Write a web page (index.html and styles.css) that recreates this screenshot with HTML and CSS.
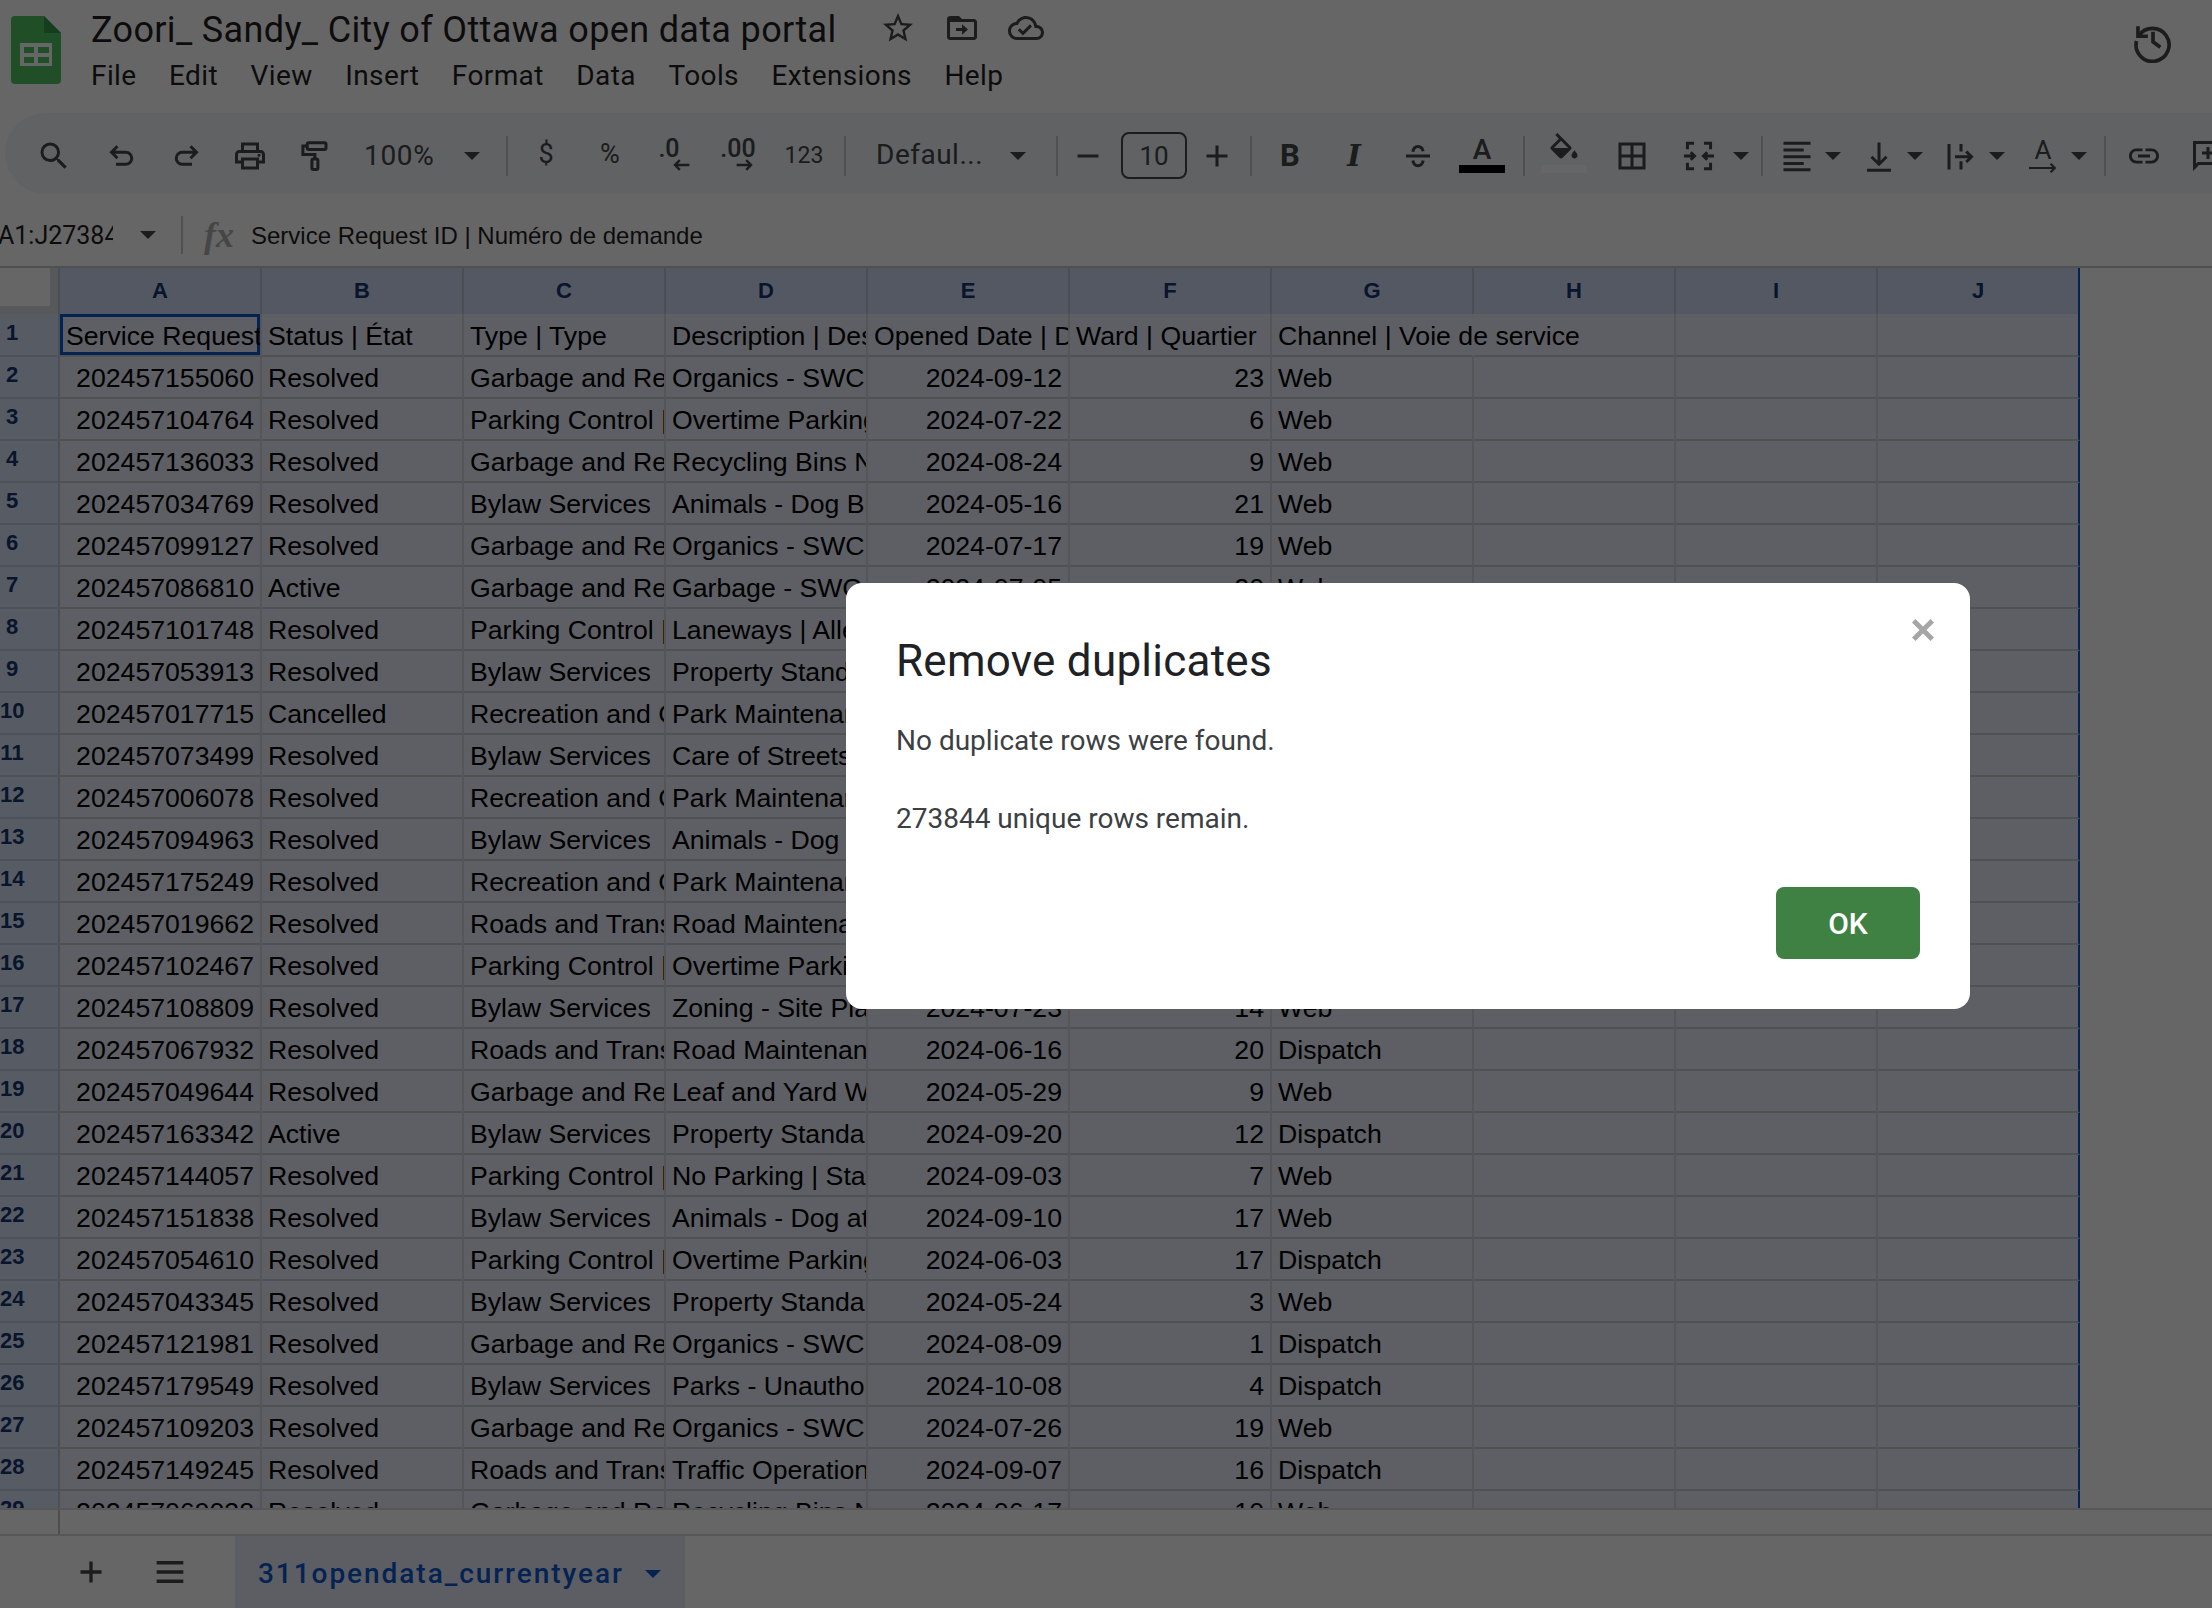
FILE: index.html
```html
<!DOCTYPE html>
<html lang="en">
<head>
  <meta charset="UTF-8">
  <title>Zoori_ Sandy_ City of Ottawa open data portal - Google Sheets</title>
  <link rel="stylesheet" href="styles.css">
</head>
<body>

  <header class="top">
    <svg class="logo" viewBox="0 0 50 68">
      <path class="logo-body" d="M4 0h29l17 17v47a4 4 0 0 1-4 4H4a4 4 0 0 1-4-4V4a4 4 0 0 1 4-4z"/>
      <path class="logo-fold" d="M33 0l17 17H33z"/>
      <path class="logo-grid" fill-rule="evenodd" d="M9 27h32v23H9zM13 31v6h10v-6zM27 31v6h11v-6zM13 41v6h10v-6zM27 41v6h11v-6z"/>
    </svg>
    <div class="doc">
      <div class="doc-title">
        <span class="title">Zoori_ Sandy_ City of Ottawa open data portal</span>
        <svg class="ic ic-star" viewBox="0 0 24 24"><path d="M22 9.24l-7.19-.62L12 2 9.19 8.63 2 9.24l5.46 4.73L5.82 21 12 17.27 18.18 21l-1.63-7.03L22 9.24zM12 15.4l-3.76 2.27 1-4.28-3.32-2.88 4.38-.38L12 6.1l1.71 4.04 4.38.38-3.32 2.88 1 4.28L12 15.4z"/></svg>
        <svg class="ic ic-move" viewBox="0 0 24 24"><path d="M20 6h-8l-2-2H4c-1.1 0-2 .9-2 2v12c0 1.1.9 2 2 2h16c1.1 0 2-.9 2-2V8c0-1.1-.9-2-2-2zm0 12H4V8h16v10zM12 16.5l4-3.5-4-3.5V12H8v2h4z"/></svg>
        <svg class="ic ic-cloud" viewBox="0 0 24 24"><path d="M19.35 10.04C18.67 6.59 15.64 4 12 4 9.11 4 6.6 5.64 5.35 8.04 2.34 8.36 0 10.91 0 14c0 3.31 2.69 6 6 6h13c2.76 0 5-2.24 5-5 0-2.64-2.05-4.78-4.65-4.96zM19 18H6c-2.21 0-4-1.79-4-4 0-2.05 1.53-3.76 3.56-3.97l1.07-.11.5-.95C8.08 7.14 9.94 6 12 6c2.62 0 4.88 1.86 5.39 4.43l.3 1.5 1.53.11c1.56.1 2.78 1.41 2.78 2.96 0 1.65-1.35 3-3 3zm-9-3.82l-2.09-2.09L6.5 13.5 10 17l6.01-6.01-1.41-1.41z"/></svg>
      </div>
      <nav class="menu">
        <a>File</a><a>Edit</a><a>View</a><a>Insert</a><a>Format</a><a>Data</a><a>Tools</a><a>Extensions</a><a>Help</a>
      </nav>
    </div>
    <svg class="history" viewBox="0 0 24 24"><path d="M3.8 4v5.4h5.4M4.2 9.2A9 9 0 1 1 3 12M12 7v5.4l4 3"/></svg>
  </header>

  <div class="toolbar">
    <span class="btn btn-search"><svg class="ic" viewBox="0 0 24 24"><path d="M15.5 14h-.79l-.28-.27A6.471 6.471 0 0 0 16 9.5 6.5 6.5 0 1 0 9.5 16c1.61 0 3.09-.59 4.23-1.57l.27.28v.79l5 4.99L20.49 19l-4.99-5zm-6 0C7.01 14 5 11.99 5 9.5S7.01 5 9.5 5 14 7.01 14 9.5 11.99 14 9.5 14z"/></svg></span>
    <span class="btn"><svg class="ic line" viewBox="0 0 24 24"><path d="M9 5.5l-4 4 4 4M5 9.5h9.5a4 4 0 0 1 0 8H8"/></svg></span>
    <span class="btn"><svg class="ic line" viewBox="0 0 24 24"><path d="M15 5.5l4 4-4 4M19 9.5H9.5a4 4 0 0 0 0 8H16"/></svg></span>
    <span class="btn"><svg class="ic" viewBox="0 0 24 24"><path d="M19 8h-1V3H6v5H5c-1.66 0-3 1.34-3 3v6h4v4h12v-4h4v-6c0-1.66-1.34-3-3-3zM8 5h8v3H8V5zm8 12v2H8v-4h8v2zm2-2v-2H6v2H4v-4c0-.55.45-1 1-1h14c.55 0 1 .45 1 1v4h-2z"/><circle cx="18" cy="11.5" r="1"/></svg></span>
    <span class="btn"><svg class="ic line" viewBox="0 0 24 24"><rect x="7.5" y="3.2" width="12.5" height="4.4" rx="1"/><path d="M7.5 5.4H4.6v5.6h8v3"/><rect x="10.6" y="14" width="4" height="7" rx="1"/></svg></span>
    <span class="drop drop-zoom"><span>100%</span><i class="caret"></i></span>
    <i class="sep sep-zoom"></i>
    <span class="btn btn-txt">$</span>
    <span class="btn btn-txt">%</span>
    <span class="btn btn-dec btn-dec-less"><span>.0</span><svg class="arrow" viewBox="0 0 14 10"><path d="M14 5H3M6 1L2 5l4 4"/></svg></span>
    <span class="btn btn-dec"><span>.00</span><svg class="arrow" viewBox="0 0 14 10"><path d="M0 5h11M8 1l4 4-4 4"/></svg></span>
    <span class="btn btn-123">123</span>
    <i class="sep sep-num"></i>
    <span class="drop drop-font"><span>Defaul...</span><i class="caret"></i></span>
    <i class="sep sep-font"></i>
    <span class="btn btn-minus"><svg class="ic line" viewBox="0 0 24 24"><path d="M5 12h14"/></svg></span>
    <span class="size">10</span>
    <span class="btn btn-plus"><svg class="ic line" viewBox="0 0 24 24"><path d="M5 12h14M12 5v14"/></svg></span>
    <i class="sep sep-size"></i>
    <span class="btn btn-b">B</span>
    <span class="btn btn-i">I</span>
    <span class="btn"><svg class="ic line" viewBox="0 0 24 24"><path d="M4 12h16M8.6 9.2C8.9 6.8 10.4 5.6 12 5.6s3 1.2 3.4 3.2M8.6 15c.2 2.2 1.700 3.500 3.400 3.500s3.200-1.300 3.400-3.500"/></svg></span>
    <span class="btn btn-color"><span class="a">A</span><i class="bar bar-text"></i></span>
    <i class="sep sep-color"></i>
    <span class="btn btn-color"><svg class="ic" viewBox="0 0 24 18"><path d="M16.56 8.94L7.62 0 6.210 1.410l2.380 2.380-5.150 5.150c-.59.59-.59 1.540 0 2.120l5.500 5.500c.29.29.68.44 1.060.44s.77-.15 1.060-.44l5.500-5.500c.59-.58.59-1.530 0-2.120zM5.210 10L10 5.210 14.790 10H5.210zM19 11.500s-2 2.170-2 3.500c0 1.100.9 2 2 2s2-.9 2-2c0-1.330-2-3.500-2-3.500z"/></svg><i class="bar bar-fill"></i></span>
    <span class="btn btn-borders"><svg class="ic" viewBox="0 0 24 24"><path d="M3 3v18h18V3H3zm8 16H5v-6h6v6zm0-8H5V5h6v6zm8 8h-6v-6h6v6zm0-8h-6V5h6v6z"/></svg></span>
    <span class="btn btn-merge"><svg class="ic line" viewBox="0 0 24 24"><path d="M8.700 3.500H4.300v4M4.300 16.500v4h4.400M15.300 3.500h4.400v4M19.700 16.500v4h-4.400M2 12h7M6.500 9.500L9 12l-2.500 2.500M22 12h-7M17.500 9.500L15 12l2.500 2.500"/></svg></span>
    <i class="caret caret-merge"></i>
    <i class="sep sep-merge"></i>
    <span class="split"><svg class="ic line" viewBox="0 0 24 24"><path d="M3 3.500h18M3 8h13.500M3 12.500h18M3 17h13.500M3 21.200h18"/></svg><i class="caret"></i></span>
    <span class="split"><svg class="ic line" viewBox="0 0 24 24"><path d="M4 21.500h16M12 3v14M7 12.500l5 5 5-5"/></svg><i class="caret"></i></span>
    <span class="split"><svg class="ic line" viewBox="0 0 24 24"><path d="M4 4v17M12 4v5M12 15.500V21M8 12.500h11M15.500 9l3.500 3.500-3.500 3.500"/></svg><i class="caret"></i></span>
    <span class="split"><span class="rot"><span>A</span><svg class="arrow" viewBox="0 0 26 10"><path d="M0 5h23M20 1l4 4-4 4"/></svg></span><i class="caret"></i></span>
    <i class="sep sep-rot"></i>
    <span class="btn"><svg class="ic" viewBox="0 0 24 24"><path d="M3.900 12c0-1.710 1.390-3.100 3.100-3.100h4V7H7c-2.760 0-5 2.240-5 5s2.240 5 5 5h4v-1.900H7c-1.710 0-3.100-1.390-3.100-3.100zM8 13h8v-2H8v2zm9-6h-4v1.900h4c1.710 0 3.100 1.390 3.100 3.100s-1.390 3.100-3.100 3.100h-4V17h4c2.760 0 5-2.240 5-5s-2.240-5-5-5z"/></svg></span>
    <span class="btn"><svg class="ic" viewBox="0 0 24 24"><path fill-rule="evenodd" d="M22 2H2v20l4-4h16V2zM20 16H5.170L4 17.170V4h16v12zM11 6h2v3h3v2h-3v3h-2v-3H8V9h3V6z"/></svg></span>
  </div>

  <div class="formula">
    <div class="namebox"><span>A1:J27384</span></div>
    <i class="caret"></i>
    <i class="sep sep-name"></i>
    <span class="fx">fx</span>
    <span class="formula-text">Service Request ID | Numéro de demande</span>
  </div>

  <div class="grid">
    <table class="sheet">
      <colgroup>
        <col class="c-row"><col span="10" class="c-col">
      </colgroup>
      <thead>
        <tr><th class="corner"><i></i></th><th>A</th><th>B</th><th>C</th><th>D</th><th>E</th><th>F</th><th>G</th><th>H</th><th>I</th><th>J</th></tr>
      </thead>
      <tbody>
        <tr class="first"><th>1</th><td class="active">Service Request ID | Numéro de demande</td><td>Status | État</td><td>Type | Type</td><td>Description | Description</td><td>Opened Date | Date</td><td>Ward | Quartier</td><td class="spill">Channel | Voie de service</td><td></td><td></td><td></td></tr>
        <tr><th>2</th><td class="n">202457155060</td><td>Resolved</td><td>Garbage and Recycling</td><td>Organics - SWC | Matières</td><td class="n">2024-09-12</td><td class="n">23</td><td>Web</td><td></td><td></td><td></td></tr>
        <tr><th>3</th><td class="n">202457104764</td><td>Resolved</td><td>Parking Control | Contrôle</td><td>Overtime Parking</td><td class="n">2024-07-22</td><td class="n">6</td><td>Web</td><td></td><td></td><td></td></tr>
        <tr><th>4</th><td class="n">202457136033</td><td>Resolved</td><td>Garbage and Recycling</td><td>Recycling Bins Not</td><td class="n">2024-08-24</td><td class="n">9</td><td>Web</td><td></td><td></td><td></td></tr>
        <tr><th>5</th><td class="n">202457034769</td><td>Resolved</td><td>Bylaw Services</td><td>Animals - Dog Bite</td><td class="n">2024-05-16</td><td class="n">21</td><td>Web</td><td></td><td></td><td></td></tr>
        <tr><th>6</th><td class="n">202457099127</td><td>Resolved</td><td>Garbage and Recycling</td><td>Organics - SWC | Matières</td><td class="n">2024-07-17</td><td class="n">19</td><td>Web</td><td></td><td></td><td></td></tr>
        <tr><th>7</th><td class="n">202457086810</td><td>Active</td><td>Garbage and Recycling</td><td>Garbage - SWC</td><td class="n">2024-07-05</td><td class="n">20</td><td>Web</td><td></td><td></td><td></td></tr>
        <tr><th>8</th><td class="n">202457101748</td><td>Resolved</td><td>Parking Control | Contrôle</td><td>Laneways | Allées</td><td></td><td></td><td></td><td></td><td></td><td></td></tr>
        <tr><th>9</th><td class="n">202457053913</td><td>Resolved</td><td>Bylaw Services</td><td>Property Standards</td><td></td><td></td><td></td><td></td><td></td><td></td></tr>
        <tr><th>10</th><td class="n">202457017715</td><td>Cancelled</td><td>Recreation and Culture</td><td>Park Maintenance</td><td></td><td></td><td></td><td></td><td></td><td></td></tr>
        <tr><th>11</th><td class="n">202457073499</td><td>Resolved</td><td>Bylaw Services</td><td>Care of Streets</td><td></td><td></td><td></td><td></td><td></td><td></td></tr>
        <tr><th>12</th><td class="n">202457006078</td><td>Resolved</td><td>Recreation and Culture</td><td>Park Maintenance</td><td></td><td></td><td></td><td></td><td></td><td></td></tr>
        <tr><th>13</th><td class="n">202457094963</td><td>Resolved</td><td>Bylaw Services</td><td>Animals - Dog</td><td></td><td></td><td></td><td></td><td></td><td></td></tr>
        <tr><th>14</th><td class="n">202457175249</td><td>Resolved</td><td>Recreation and Culture</td><td>Park Maintenance</td><td></td><td></td><td></td><td></td><td></td><td></td></tr>
        <tr><th>15</th><td class="n">202457019662</td><td>Resolved</td><td>Roads and Transportation</td><td>Road Maintenance</td><td></td><td></td><td></td><td></td><td></td><td></td></tr>
        <tr><th>16</th><td class="n">202457102467</td><td>Resolved</td><td>Parking Control | Contrôle</td><td>Overtime Parking</td><td></td><td></td><td></td><td></td><td></td><td></td></tr>
        <tr><th>17</th><td class="n">202457108809</td><td>Resolved</td><td>Bylaw Services</td><td>Zoning - Site Plan</td><td class="n">2024-07-23</td><td class="n">14</td><td>Web</td><td></td><td></td><td></td></tr>
        <tr><th>18</th><td class="n">202457067932</td><td>Resolved</td><td>Roads and Transportation</td><td>Road Maintenance</td><td class="n">2024-06-16</td><td class="n">20</td><td>Dispatch</td><td></td><td></td><td></td></tr>
        <tr><th>19</th><td class="n">202457049644</td><td>Resolved</td><td>Garbage and Recycling</td><td>Leaf and Yard Waste</td><td class="n">2024-05-29</td><td class="n">9</td><td>Web</td><td></td><td></td><td></td></tr>
        <tr><th>20</th><td class="n">202457163342</td><td>Active</td><td>Bylaw Services</td><td>Property Standards</td><td class="n">2024-09-20</td><td class="n">12</td><td>Dispatch</td><td></td><td></td><td></td></tr>
        <tr><th>21</th><td class="n">202457144057</td><td>Resolved</td><td>Parking Control | Contrôle</td><td>No Parking | Stationnement</td><td class="n">2024-09-03</td><td class="n">7</td><td>Web</td><td></td><td></td><td></td></tr>
        <tr><th>22</th><td class="n">202457151838</td><td>Resolved</td><td>Bylaw Services</td><td>Animals - Dog at Large</td><td class="n">2024-09-10</td><td class="n">17</td><td>Web</td><td></td><td></td><td></td></tr>
        <tr><th>23</th><td class="n">202457054610</td><td>Resolved</td><td>Parking Control | Contrôle</td><td>Overtime Parking</td><td class="n">2024-06-03</td><td class="n">17</td><td>Dispatch</td><td></td><td></td><td></td></tr>
        <tr><th>24</th><td class="n">202457043345</td><td>Resolved</td><td>Bylaw Services</td><td>Property Standards</td><td class="n">2024-05-24</td><td class="n">3</td><td>Web</td><td></td><td></td><td></td></tr>
        <tr><th>25</th><td class="n">202457121981</td><td>Resolved</td><td>Garbage and Recycling</td><td>Organics - SWC | Matières</td><td class="n">2024-08-09</td><td class="n">1</td><td>Dispatch</td><td></td><td></td><td></td></tr>
        <tr><th>26</th><td class="n">202457179549</td><td>Resolved</td><td>Bylaw Services</td><td>Parks - Unauthorized</td><td class="n">2024-10-08</td><td class="n">4</td><td>Dispatch</td><td></td><td></td><td></td></tr>
        <tr><th>27</th><td class="n">202457109203</td><td>Resolved</td><td>Garbage and Recycling</td><td>Organics - SWC | Matières</td><td class="n">2024-07-26</td><td class="n">19</td><td>Web</td><td></td><td></td><td></td></tr>
        <tr><th>28</th><td class="n">202457149245</td><td>Resolved</td><td>Roads and Transportation</td><td>Traffic Operations</td><td class="n">2024-09-07</td><td class="n">16</td><td>Dispatch</td><td></td><td></td><td></td></tr>
        <tr><th>29</th><td class="n">202457069038</td><td>Resolved</td><td>Garbage and Recycling</td><td>Recycling Bins Not</td><td class="n">2024-06-17</td><td class="n">10</td><td>Web</td><td></td><td></td><td></td></tr>
      </tbody>
    </table>
  </div>

  <div class="hscroll"><i></i></div>

  <footer class="tabs">
    <svg class="tabs-ic tabs-add" viewBox="0 0 24 24"><path d="M5 12h14M12 5v14"/></svg>
    <svg class="tabs-ic tabs-all" viewBox="0 0 24 24"><path d="M2 5h20M2 12h20M2 19h20"/></svg>
    <div class="tab">
      <span>311opendata_currentyear</span>
      <i class="caret caret-tab"></i>
    </div>
  </footer>

  <!-- dialogo por cima de tudo -->
  <div class="scrim"></div>
  <div class="dialog">
    <svg class="close" viewBox="0 0 22 22"><path d="M2.500 2.500l17 17M19.500 2.500l-17 17"/></svg>
    <h2>Remove duplicates</h2>
    <p class="line-1">No duplicate rows were found.</p>
    <p class="line-2">273844 unique rows remain.</p>
    <div class="actions"><button>OK</button></div>
  </div>

</body>
</html>
```

FILE: styles.css
```css
* { box-sizing: border-box; }
html, body {
  margin: 0;
  height: 1608px;
  overflow: hidden;
}
body {
  position: relative;
  background: #fff;
  color: #1f1f1f;
  font-family: Roboto, sans-serif;
}
i { display: block; }

/* top */
.top {
  display: flex;
  height: 113px;
  padding: 16px 0 0 11px;
}
.logo { width: 50px; height: 68px; flex: none; }
.logo-body { fill: #4fc463; }
.logo-fold { fill: #379a4c; }
.logo-grid { fill: #fff; }
.doc { margin-left: 30px; margin-top: -16px; }
.doc-title {
  display: flex;
  align-items: center;
  height: 56px;
}
.title {
  width: 789px;
  padding-top: 3px;
  font-size: 36px;
  letter-spacing: 0.35px;
  white-space: nowrap;
}
.ic { width: 36px; height: 36px; fill: #444746; flex: none; }
.ic-move { margin-left: 28px; }
.ic-cloud { margin-left: 28px; }
.menu {
  display: flex;
  gap: 32.5px;
  margin-top: 1px;
  font-size: 28px;
  letter-spacing: 0.4px;
  line-height: 38px;
}
.history {
  width: 44px;
  height: 44px;
  margin: 3px 37px 0 auto;
  fill: none;
  stroke: #444746;
  stroke-width: 2;
}
.line, .arrow {
  fill: none;
  stroke: #444746;
  stroke-width: 2;
}

/* toolbar */
.toolbar {
  display: flex;
  align-items: center;
  width: 2300px;
  height: 81px;
  margin-left: 5px;
  padding: 4px 0 0 16px;
  background: #f0f4f9;
  border-radius: 48px;
  color: #444746;
}
.btn {
  display: flex;
  align-items: center;
  justify-content: center;
  width: 64px;
  height: 56px;
  flex: none;
}
.btn-search { margin: 0 4px 0 1px; }
.sep {
  width: 2px;
  height: 40px;
  background: #c7c7c7;
  flex: none;
}
.sep-zoom { margin: 0 6px 0 16px; }
.sep-num { margin: 0 10px 0 6px; }
.sep-font { margin: 0 0 0 20px; }
.sep-size { margin: 0 6px 0 8px; }
.sep-color { margin: 0 7px 0 9px; }
.sep-merge { margin: 0 2px 0 12px; }
.sep-rot { margin: 0 6px 0 11px; }
.caret {
  width: 0;
  height: 0;
  border-left: 8px solid transparent;
  border-right: 8px solid transparent;
  border-top: 8px solid #444746;
  flex: none;
}
.drop {
  display: flex;
  align-items: center;
  justify-content: space-between;
  height: 56px;
  padding-right: 10px;
  font-size: 28px;
  flex: none;
}
.drop-zoom { width: 144px; padding-left: 18px; letter-spacing: 0.7px; }
.drop-font { width: 180px; padding-left: 20px; letter-spacing: 0.5px; }
.drop-font span { margin-bottom: 3px; }
.btn-txt { font-size: 27px; padding-bottom: 3px; }
.btn-dec {
  flex-direction: column;
  font-size: 25px;
  font-weight: 500;
  line-height: 24px;
  padding-bottom: 4px;
}
.btn-dec .arrow { width: 20px; height: 12px; margin-top: -2px; margin-left: 14px; }
.btn-dec-less span { margin-right: 10px; }
.btn-123 { width: 68px; font-size: 23px; }
.btn-minus { width: 56px; margin-right: 5px; margin-left: 2px; }
.btn-plus { width: 50px; margin-left: 5px; }
.size {
  display: flex;
  align-items: center;
  justify-content: center;
  width: 66px;
  height: 47px;
  border: 2px solid #444746;
  border-radius: 8px;
  font-size: 26px;
  flex: none;
}
.btn-b { font-size: 31px; font-weight: 700; }
.btn-i { font-family: "DejaVu Serif", serif; font-size: 29px; font-weight: 700; font-style: italic; }
.btn-color {
  flex-direction: column;
  justify-content: flex-start;
  height: 40px;
  margin-bottom: 5px;
}
.btn-color .a { margin-top: 2px; font-size: 28px; font-weight: 500; line-height: 30px; }
.btn-color .ic { height: 27px; }
.bar { width: 46px; height: 8px; margin-top: auto; flex: none; }
.bar-text { background: #000; }
.bar-fill { background: #fff; }
.btn-borders { margin-left: 4px; }
.btn-merge { margin-left: 3px; }
.caret-merge { margin-left: 2px; }
.split {
  display: flex;
  align-items: center;
  width: 82px;
  padding-left: 14px;
  flex: none;
}
.split .caret { margin-left: 10px; }
.rot {
  display: flex;
  flex-direction: column;
  align-items: center;
  width: 36px;
  font-size: 26px;
  line-height: 26px;
}
.rot .arrow { width: 28px; height: 12px; margin-top: -1px; }

/* formula bar */
.formula {
  display: flex;
  align-items: center;
  height: 74px;
  border-bottom: 2px solid #c7c7c7;
  font-size: 24px;
  padding-top: 10px;
}
.namebox {
  width: 113px;
  overflow: hidden;
  font-size: 25px;
  white-space: nowrap;
  flex: none;
}
.namebox span { margin-left: -2px; display: block; }
.formula .caret { margin-left: 27px; }
.sep-name { height: 38px; margin: 0 0 0 25px; }
.fx {
  width: 34px;
  margin-left: 19px;
  font-family: "Liberation Serif", serif;
  font-size: 36px;
  font-style: italic;
  font-weight: 700;
  color: #b0b0b0;
  text-align: center;
}
.formula-text { margin-left: 15px; padding-top: 2px; font-family: "Liberation Sans", sans-serif; }

/* grid */
.grid {
  height: 1240px;
  overflow: hidden;
}
.sheet {
  width: 2080px;
  table-layout: fixed;
  border-collapse: separate;
  border-spacing: 0;
  font-family: "Liberation Sans", sans-serif;
  font-size: 26.67px;
}
.c-row { width: 60px; }
.c-col { width: 202px; }
.sheet thead th {
  height: 46px;
  padding: 0;
  background: #cfdcf4;
  color: #14356e;
  font-size: 22px;
  font-weight: 700;
  border-right: 2px solid #b9c3d4;
}
.sheet thead .corner {
  vertical-align: top;
  background: #dadce0;
}
.corner i { width: 50px; height: 38px; background: #fff; }
.sheet tbody tr { height: 42px; }
.sheet tbody tr.first { height: 43px; }
.sheet tbody tr.first td { padding-top: 4px; }
.sheet tbody th {
  padding: 0 34px 4px 0;
  background: #d9e6fb;
  color: #14356e;
  font-size: 22px;
  font-weight: 700;
  border-right: 2px solid #bcc6d6;
  border-bottom: 2px solid #c3cedf;
}
.sheet td {
  padding: 2px 0 0 6px;
  background: #e9eefb;
  color: #000;
  white-space: nowrap;
  overflow: hidden;
  border-right: 2px solid #d6d8de;
  border-bottom: 2px solid #c8cacf;
}
.sheet td:last-child { border-right-color: #0b57d0; }
.sheet thead th:last-child { border-right-color: #0b57d0; }
.sheet td.n { padding: 2px 6px 0 0; text-align: right; }
.sheet td.spill { overflow: visible; border-right-color: transparent; }
.sheet td.active { box-shadow: inset 0 0 0 3px #0b57d0; }

.hscroll {
  height: 28px;
  border-top: 2px solid #d9d9d9;
  border-bottom: 2px solid #d9d9d9;
}
.hscroll i { width: 60px; height: 24px; border-right: 2px solid #c4c4c4; }

/* sheet tabs */
.tabs {
  display: flex;
  align-items: center;
  height: 72px;
}
.tabs-ic {
  width: 36px;
  height: 36px;
  flex: none;
  fill: none;
  stroke: #444746;
  stroke-width: 2.2;
}
.tabs-add { margin-left: 73px; }
.tabs-all { margin-left: 45px; width: 32px; height: 32px; stroke-width: 2.600; }
.tab {
  display: flex;
  align-items: center;
  width: 450px;
  height: 72px;
  margin-left: 49px;
  padding: 3px 0 0 23px;
  background: #e6ebf8;
  color: #0b57d0;
  font-size: 28px;
  font-weight: 500;
  letter-spacing: 1.95px;
}
.caret-tab {
  margin-left: 21px;
  border-top-color: #0b57d0;
}

/* modal */
.scrim {
  position: absolute;
  inset: 0;
  background: rgba(0, 0, 0, 0.6);
}
.dialog {
  position: absolute;
  left: 846px;
  top: 583px;
  width: 1124px;
  padding: 50px;
  background: #fff;
  border-radius: 16px;
  color: #3c4043;
}
.close {
  position: absolute;
  top: 35px;
  right: 35px;
  width: 24px;
  height: 24px;
  fill: none;
  stroke: #a6a6a6;
  stroke-width: 4.500;
}
.dialog h2 {
  margin: 0;
  font-size: 44px;
  font-weight: 400;
  letter-spacing: 0.25px;
  line-height: 56px;
  color: #202124;
}
.dialog p {
  margin: 0;
  font-size: 28px;
  line-height: 40px;
}
.line-1 { padding-top: 32px; }
.line-2 { padding-top: 38px; }
.actions {
  display: flex;
  justify-content: flex-end;
  margin-top: 48px;
}
.actions button {
  width: 144px;
  height: 72px;
  border: none;
  border-radius: 8px;
  background: #3f8142;
  color: #fff;
  font-family: Roboto, sans-serif;
  font-size: 30px;
  font-weight: 500;
}
```
